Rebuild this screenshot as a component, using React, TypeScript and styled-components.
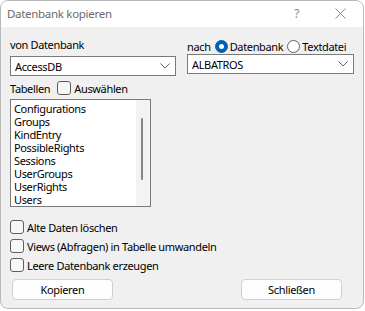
import styled, { createGlobalStyle } from "styled-components";

const GlobalStyle = createGlobalStyle`
  html, body {
    margin: 0;
    padding: 0;
    background: #ffffff;
  }
  body {
    font-family: "Noto Sans", "Open Sans", sans-serif;
    font-size: 11px;
    letter-spacing: -0.35px;
    color: #000;
  }
`;

const tables = [
  "Configurations",
  "Groups",
  "KindEntry",
  "PossibleRights",
  "Sessions",
  "UserGroups",
  "UserRights",
  "Users",
];

const options = ["Alte Daten löschen", "Views (Abfragen) in Tabelle umwandeln", "Leere Datenbank erzeugen"];

function Chevron() {
  return (
    <svg width="10" height="6" viewBox="0 0 10 6">
      <path d="M0.5 0.5 L5 5 L9.5 0.5" fill="none" stroke="#606060" strokeWidth="1" />
    </svg>
  );
}

function App() {
  return (
    <>
      <GlobalStyle />
      <Window>
        <TitleBar>
          <Title>Datenbank kopieren</Title>
          <TitleButtons>
            <HelpMark>?</HelpMark>
            <svg width="11" height="11" viewBox="0 0 11 11">
              <path d="M0.5 0.5 L10.5 10.5 M10.5 0.5 L0.5 10.5" stroke="#8a8a8a" strokeWidth="1" />
            </svg>
          </TitleButtons>
        </TitleBar>
        <Body>
          <TopGrid>
            <Column>
              <Label>von Datenbank</Label>
              <Combo $top={3}>
                <span>AccessDB</span>
                <Chevron />
              </Combo>
            </Column>
            <Column>
              <RadioRow>
                <span>nach</span>
                <RadioItem>
                  <Radio $checked />
                  Datenbank
                </RadioItem>
                <RadioItem>
                  <Radio />
                  Textdatei
                </RadioItem>
              </RadioRow>
              <Combo $top={0}>
                <span>ALBATROS</span>
                <Chevron />
              </Combo>
            </Column>
          </TopGrid>

          <TablesRow>
            <span>Tabellen</span>
            <CheckItem>
              <Box />
              Auswählen
            </CheckItem>
          </TablesRow>

          <ListBox>
            <Items>
              {tables.map((t) => (
                <Item key={t}>{t}</Item>
              ))}
            </Items>
            <ScrollTrack>
              <Thumb />
            </ScrollTrack>
          </ListBox>

          <Options>
            {options.map((o) => (
              <CheckItem key={o}>
                <Box />
                {o}
              </CheckItem>
            ))}
          </Options>

          <Buttons>
            <Button>Kopieren</Button>
            <Button>Schließen</Button>
          </Buttons>
        </Body>
      </Window>
    </>
  );
}

export default App;

const Window = styled.div`
  width: 362px;
  height: 307px;
  border: 1px solid #b9b9b9;
  border-radius: 8px;
  overflow: hidden;
  background: #f0f0f0;
  display: flex;
  flex-direction: column;
`;

const TitleBar = styled.div`
  height: 26px;
  background: #ffffff;
  display: flex;
  align-items: center;
  justify-content: space-between;
  padding: 0 17px 2px 6px;
  flex-shrink: 0;
  box-sizing: border-box;
`;

const Title = styled.div`
  color: #6b6b6b;
  font-size: 11.5px;
  letter-spacing: -0.3px;
`;

const TitleButtons = styled.div`
  display: flex;
  align-items: center;
  gap: 36px;
`;

const HelpMark = styled.span`
  color: #8a8a8a;
  font-size: 12px;
`;

const Body = styled.div`
  flex: 1;
  padding: 10px 9px 0 9px;
  display: flex;
  flex-direction: column;
`;

const TopGrid = styled.div`
  display: grid;
  grid-template-columns: 166px 167px;
  column-gap: 11px;
  align-items: start;
`;

const Column = styled.div`
  display: flex;
  flex-direction: column;
`;

const Label = styled.div`
  height: 16px;
  line-height: 16px;
`;

const Combo = styled.div<{ $top: number }>`
  margin-top: ${(p) => p.$top}px;
  height: 18px;
  border: 1px solid #7a7a7a;
  background: #ffffff;
  display: flex;
  align-items: center;
  justify-content: space-between;
  padding: 0 5px 0 4px;
`;

const RadioRow = styled.div`
  display: flex;
  align-items: center;
  height: 16px;
  margin-top: 1px;
  gap: 4px;
`;

const RadioItem = styled.label`
  display: flex;
  align-items: center;
  gap: 2px;
`;

const Radio = styled.span<{ $checked?: boolean }>`
  width: 13px;
  height: 13px;
  box-sizing: border-box;
  border-radius: 50%;
  border: 1px solid ${(p) => (p.$checked ? "#005fb8" : "#5f5f5f")};
  background: ${(p) => (p.$checked ? "#005fb8" : "#ffffff")};
  display: inline-flex;
  align-items: center;
  justify-content: center;
  &::after {
    content: "";
    width: 5px;
    height: 5px;
    border-radius: 50%;
    background: ${(p) => (p.$checked ? "#ffffff" : "transparent")};
  }
`;

const TablesRow = styled.div`
  display: flex;
  align-items: center;
  gap: 7px;
  margin-top: 4px;
  height: 16px;
`;

const CheckItem = styled.label`
  display: flex;
  align-items: center;
  gap: 3px;
  height: 16px;
`;

const Box = styled.span`
  width: 12px;
  height: 12px;
  border: 1px solid #5f5f5f;
  border-radius: 3px;
  background: #f7f7f7;
`;

const ListBox = styled.div`
  margin-top: 3px;
  width: 139px;
  height: 106px;
  border: 1px solid #7a7a7a;
  background: #ffffff;
  display: flex;
  overflow: hidden;
`;

const Items = styled.div`
  flex: 1;
  padding: 2px 3px 0 3px;
`;

const Item = styled.div`
  height: 13px;
  line-height: 13px;
`;

const ScrollTrack = styled.div`
  width: 14px;
  background: #f3f3f3;
  position: relative;
`;

const Thumb = styled.div`
  position: absolute;
  left: 5px;
  top: 18px;
  width: 2px;
  height: 62px;
  background: #858585;
  border-radius: 1px;
`;

const Options = styled.div`
  margin-top: 12px;
  display: flex;
  flex-direction: column;
  gap: 3px;
`;

const Buttons = styled.div`
  margin-top: 6px;
  display: flex;
  justify-content: space-between;
  padding: 0 12px 0 2px;
`;

const Button = styled.div`
  width: 99px;
  height: 19px;
  border: 1px solid #d0d0d0;
  border-radius: 4px;
  background: #fdfdfd;
  display: flex;
  align-items: center;
  justify-content: center;
`;
